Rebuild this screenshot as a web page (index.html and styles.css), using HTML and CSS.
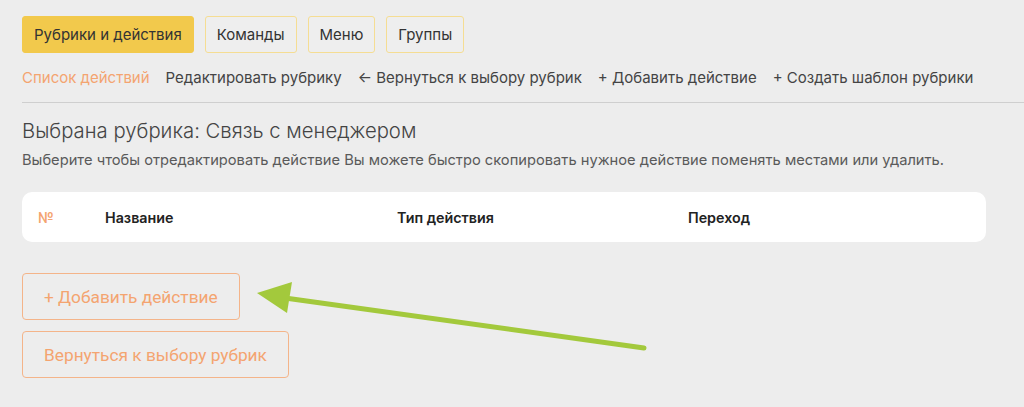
FILE: index.html
```html
<!DOCTYPE html>
<html lang="ru">

<head>
    <meta charset="UTF-8">
    <meta name="viewport" content="width=device-width, initial-scale=1.0">
    <title>Рубрики и действия</title>
    <link rel="stylesheet" href="styles.css">
</head>

<body>
    <div class="page">
        <!-- вкладки разделов -->
        <div class="tabs">
            <button class="tab active">Рубрики и действия</button>
            <button class="tab">Команды</button>
            <button class="tab">Меню</button>
            <button class="tab">Группы</button>
        </div>

        <!-- подменю рубрики -->
        <div class="subnav">
            <a class="current">Список действий</a>
            <a>Редактировать рубрику</a>
            <a>← Вернуться к выбору рубрик</a>
            <a>+ Добавить действие</a>
            <a>+ Создать шаблон рубрики</a>
        </div>

        <h2 class="title">Выбрана рубрика: Связь с менеджером</h2>
        <p class="hint">Выберите чтобы отредактировать действие Вы можете быстро скопировать нужное действие поменять местами или удалить.</p>

        <!-- таблица действий -->
        <div class="actions-table">
            <div class="col-num">№</div>
            <div class="col-name">Название</div>
            <div class="col-type">Тип действия</div>
            <div class="col-link">Переход</div>
        </div>

        <div class="buttons">
            <button class="btn-outline">+ Добавить действие</button>
            <button class="btn-outline">Вернуться к выбору рубрик</button>
        </div>
    </div>

    <!-- стрелка-подсказка -->
    <svg class="pointer" width="1024" height="407" viewBox="0 0 1024 407">
        <line x1="285" y1="298" x2="644" y2="348" stroke="#a3c93c" stroke-width="5" stroke-linecap="round" />
        <polygon points="257,293 292,282 287,313" fill="#a3c93c" />
    </svg>
</body>

</html>
```

FILE: styles.css
```css
* {
    margin: 0;
    padding: 0;
    box-sizing: border-box;
}

body {
    font-family: Inter, "Noto Sans", sans-serif;
    background-color: #ededed;
    color: #333;
    position: relative;
}

.page {
    padding: 16px 0 0 22px;
}

.tabs {
    display: flex;
    gap: 11px;
}

.tab {
    height: 37px;
    padding: 0 11px;
    font-family: Inter, sans-serif;
    font-size: 15px;
    color: #333;
    background-color: #eeeeee;
    border: 1px solid #f5dd93;
    border-radius: 3px;
}

.tab.active {
    background-color: #f2c94c;
    border-color: #f2c94c;
}

.subnav {
    display: flex;
    gap: 16px;
    height: 50px;
    align-items: center;
    border-bottom: 1px solid #cfcfcf;
    font-size: 15px;
    color: #444;
}

.subnav .current {
    color: #f4a470;
}

.title {
    font-size: 20.3px;
    font-weight: 300;
    color: #444;
    margin-top: 16px;
    line-height: 24px;
}

.hint {
    font-size: 14.7px;
    color: #5a5a5a;
    margin-top: 9px;
    line-height: 17px;
}

.actions-table {
    display: flex;
    align-items: center;
    height: 50px;
    margin: 23px 38px 0 0;
    background-color: #fff;
    border-radius: 10px;
    font-size: 14.3px;
    font-weight: 600;
    color: #222;
}

.col-num {
    width: 83px;
    padding-left: 16px;
    color: #f4a470;
}

.col-name {
    width: 292px;
}

.col-type {
    width: 291px;
}

.buttons {
    display: flex;
    flex-direction: column;
    align-items: flex-start;
    gap: 11px;
    margin-top: 31px;
}

.btn-outline {
    height: 47px;
    padding: 0 21px;
    font-family: Roboto, sans-serif;
    font-size: 17.3px;
    color: #f4a470;
    background: transparent;
    border: 1px solid #f4b489;
    border-radius: 4px;
}

.pointer {
    position: absolute;
    left: 0;
    top: 0;
    pointer-events: none;
}
```
